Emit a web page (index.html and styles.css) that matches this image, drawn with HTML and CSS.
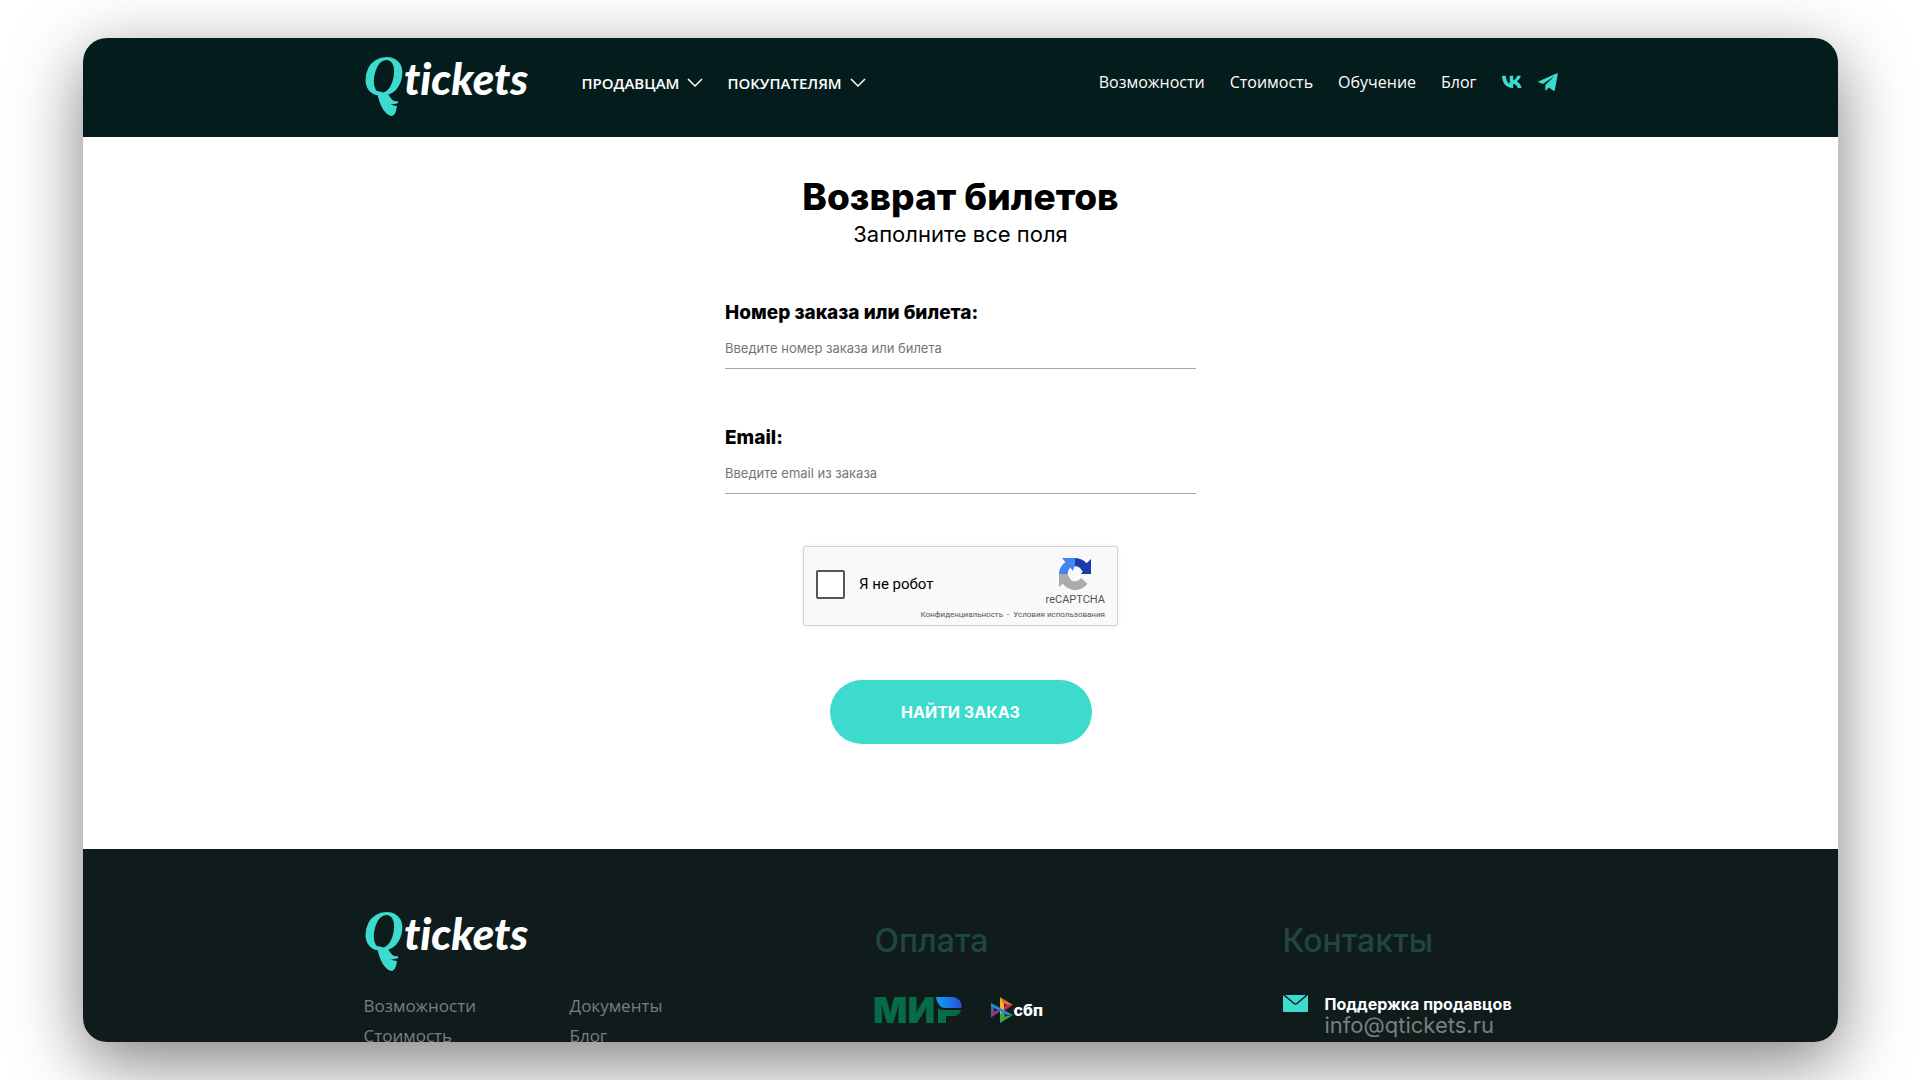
FILE: index.html
```html
<!DOCTYPE html>
<html lang="ru">
<head>
  <meta charset="UTF-8">
  <meta name="viewport" content="width=device-width, initial-scale=1.0">
  <title>Возврат билетов</title>
  <link rel="stylesheet" href="styles.css">
</head>
<body>

<div class="window">
  <header class="header">
    <div class="container header-inner">
      <a class="logo" href="#">
        <span class="logo-q">Q</span><span class="logo-text">tickets</span>
        <svg class="logo-swash" width="20" height="26" viewBox="0 0 20 26"><path fill="#3cdbcd" d="M0 0l5 1c1 8 6 13 15 14-1 6-2 9-5 10C9 25 2 15 0 0z"/></svg>
      </a>

      <nav class="menu">
        <button class="menu-btn" type="button">ПРОДАВЦАМ
          <svg class="chevron" viewBox="0 0 16 10"><path d="M1 1l7 7 7-7"/></svg>
        </button>
        <button class="menu-btn" type="button">ПОКУПАТЕЛЯМ
          <svg class="chevron" viewBox="0 0 16 10"><path d="M1 1l7 7 7-7"/></svg>
        </button>
      </nav>

      <nav class="links">
        <a href="#">Возможности</a>
        <a href="#">Стоимость</a>
        <a href="#">Обучение</a>
        <a href="#">Блог</a>
        <span class="social">
          <a href="#" aria-label="VK">
            <svg width="20" height="20" viewBox="0 0 20 20"><path fill="#3cdbcd" d="M10.900 16C4.100 16 .3 11.400 0 3.800h3.800c.2 5.200 2.400 7.300 4 7.700V3.800h3.400v4.500c1.700-.2 3.400-2.200 4-4.500h3.600c-.5 2.700-2.500 4.800-4 5.700 1.500.7 3.900 2.500 4.900 6.500h-3.900c-.7-2.200-2.400-3.900-4.600-4.200V16z"/></svg>
          </a>
          <a href="#" aria-label="Telegram">
            <svg width="20" height="20" viewBox="0 0 20 20"><path fill="#3cdbcd" d="M18.900 1.200L.9 9.200c-.7.300-.7 1 0 1.200l4 1.500L16.200 4.200 7.300 13v4.900c0 .6.600.8 1 .4l2.500-2.900 4.700 3.400c.6.300 1.100.1 1.300-.6L19.800 2c.1-.6-.3-1-.9-.8z"/></svg>
          </a>
        </span>
      </nav>
    </div>
  </header>

  <main class="content">
    <h1>Возврат билетов</h1>
    <p class="subtitle">Заполните все поля</p>

    <form class="refund-form">
      <div class="field">
        <label for="order">Номер заказа или билета:</label>
        <input type="text" id="order" name="order" placeholder="Введите номер заказа или билета">
      </div>
      <div class="field">
        <label for="email">Email:</label>
        <input type="email" id="email" name="email" placeholder="Введите email из заказа">
      </div>

      <div class="captcha">
        <div class="captcha-check">
          <input type="checkbox" id="robot" name="robot">
          <label for="robot">Я не робот</label>
        </div>
        <div class="captcha-brand">
          <svg width="32" height="32" viewBox="0 0 32 32">
            <path fill="#1c3aa9" d="M16 0c4.700 0 8.800 2.100 11.600 5.200L32 1v15H20l3-3.400c-1.500-2.600-4-4.400-7-4.500z"/>
            <path fill="#4285f4" d="M16 0H3l3.500 4.200C2.500 7 0 11.300 0 16h9c0-2.500.9-4.700 2.300-6.500L14 13l2-3z"/>
            <path fill="#ababab" d="M0 16v13l4-3.300C7 29.600 11.300 32 16 32c5.200 0 9.600-2.500 12.500-6.300L22 20c-1.300 2-3.500 3.300-6 3.300-1.800 0-3.400-.6-4.700-1.600L15 16z"/>
            <path fill="#f9f9f9" d="M8.500 16l1.500-5 4 3 1-5h4l1 4 4 0-4 6-3 4-5-1-2-3z"/>
          </svg>
          <span class="captcha-name">reCAPTCHA</span>
        </div>
        <div class="captcha-terms">
          <a href="#">Конфиденциальность</a> &nbsp;-&nbsp; <a href="#">Условия использования</a>
        </div>
      </div>

      <button class="submit" type="submit">НАЙТИ ЗАКАЗ</button>
    </form>
  </main>

  <footer class="footer">
    <div class="container footer-inner">
      <div class="footer-nav">
        <a class="logo" href="#">
          <span class="logo-q">Q</span><span class="logo-text">tickets</span>
          <svg class="logo-swash" width="20" height="26" viewBox="0 0 20 26"><path fill="#3cdbcd" d="M0 0l5 1c1 8 6 13 15 14-1 6-2 9-5 10C9 25 2 15 0 0z"/></svg>
        </a>
        <div class="footer-links">
          <a href="#">Возможности</a>
          <a href="#">Документы</a>
          <a href="#">Стоимость</a>
          <a href="#">Блог</a>
        </div>
      </div>

      <div class="payment">
        <h2>Оплата</h2>
        <div class="pay-logos">
          <svg class="mir" width="88" height="28" viewBox="0 0 88 28" role="img" aria-label="МИР">
            <defs>
              <linearGradient id="mir" x1="0" x2="1"><stop offset="0" stop-color="#139cf5"/><stop offset="1" stop-color="#2553d8"/></linearGradient>
            </defs>
            <text class="mir-text" x="-2" y="27">МИ</text>
            <path fill="#066b47" d="M63 12c1.500 1.500 3 2 5 2h18c-1 4-4 6-8 6h-7v7h-8z"/>
            <path fill="url(#mir)" d="M61 1h16c6 0 10 4 9.500 11H70c-5 0-8-5-9-11z"/>
          </svg>
          <span class="sbp">
            <svg width="22" height="26" viewBox="0 0 22 26">
              <path fill="#5b57a2" d="M0 6l5 8v2l-5 4.500z"/>
              <path fill="#d9762a" d="M9 0l13 8-6 0-3-1.500z"/>
              <path fill="#f5b22d" d="M9 0l4 6.500V20l-4 6z"/>
              <path fill="#c8234b" d="M22 8l-9 6V9l3-1.500z"/>
              <path fill="#3fa34a" d="M9 26v-9l4-2 1 4 8-1z"/>
              <path fill="#1f8cd0" d="M0 6l22 12h-6L0 9.500z"/>
              <path fill="#8c3f8e" d="M0 20.500l9-6-4-1.500-5 4z"/>
              <path fill="#101c1b" d="M3 11l3 2-3 2zM14 17.500l2 1.300-2 1.200z"/>
            </svg>
            сбп
          </span>
        </div>
      </div>

      <div class="contacts">
        <h2>Контакты</h2>
        <div class="contact">
          <svg width="25" height="17" viewBox="0 0 25 17"><rect width="25" height="17" rx="1" fill="#3cdbcd"/><path d="M1 0l10 8.500c1 .8 2 .8 3 0L24 0" fill="none" stroke="#101c1b" stroke-width="1.500"/></svg>
          <div>
            <strong>Поддержка продавцов</strong>
            <a href="mailto:info@qtickets.ru">info@qtickets.ru</a>
          </div>
        </div>
      </div>
    </div>
  </footer>
</div>

</body>
</html>
```
FILE: styles.css
```css
* {
  box-sizing: border-box;
}
body {
  display: flex;
  height: 100vh;
  margin: 0;
  padding: 38px 82px 38px 83px;
  background: #fff;
  font-family: "Inter", "Open Sans", sans-serif;
  color: #000;
}
a {
  color: inherit;
  text-decoration: none;
}
svg {
  flex: none;
}
.window {
  flex: 1;
  overflow: hidden;
  border-radius: 24px;
  background: #fff;
  box-shadow: 0 20px 68px rgba(0, 0, 0, 0.5);
}
.container {
  width: 100%;
  max-width: 1194px;
  margin: 0 auto;
}

/* header */
.header {
  background: #041c1b;
}
.header-inner {
  display: flex;
  height: 99px;
  padding-bottom: 12px;
  align-items: center;
  font-family: "Open Sans", sans-serif;
  font-size: 16px;
  color: #fff;
}
.logo {
  position: relative;
  display: flex;
  align-items: baseline;
  width: 184px;
  height: 64px;
  color: #fff;
  font-style: italic;
  font-weight: bold;
  line-height: 52px;
}
.logo-q {
  color: #3cdbcd;
  font-family: "Liberation Serif", serif;
  font-size: 56px;
}
.logo-text {
  font-family: "Lato", sans-serif;
  font-weight: 900;
  font-size: 44px;
  font-variant-ligatures: none;
}
.logo-swash {
  position: absolute;
  left: 13px;
  top: 41px;
}
.menu {
  display: flex;
  gap: 24px;
  margin-left: 34px;
}
.menu-btn {
  display: flex;
  align-items: center;
  gap: 8px;
  padding: 2px 0 0;
  border: 0;
  background: none;
  color: #fff;
  font: 600 15px "Open Sans", sans-serif;
  cursor: pointer;
}
.chevron {
  width: 16px;
  height: 10px;
  fill: none;
  stroke: #fff;
  stroke-width: 1.5;
}
.links {
  display: flex;
  align-items: center;
  gap: 25px;
  margin-left: auto;
}
.social {
  display: flex;
  gap: 16px;
}
.social svg {
  display: block;
}

/* form */
.content {
  height: 712px;
  padding-top: 37px;
  text-align: center;
}
h1 {
  margin: 0;
  font-size: 37px;
  font-weight: 800;
  line-height: 46px;
}
.subtitle {
  margin: 0;
  font-size: 22px;
  line-height: 28px;
}
.refund-form {
  display: flex;
  flex-direction: column;
  align-items: center;
  max-width: 471px;
  margin: 53px auto 0;
}
.field {
  width: 100%;
  text-align: left;
}
.field + .field {
  margin-top: 57px;
}
.field label {
  display: block;
  font-size: 19px;
  font-weight: 800;
  line-height: 24px;
}
.field input {
  display: block;
  width: 100%;
  height: 44px;
  padding: 2px 0 0;
  border: 0;
  border-bottom: 1px solid #a5a5a5;
  outline: 0;
  font-family: inherit;
  font-size: 13px;
}
.field input::placeholder {
  color: #757575;
}
.captcha {
  display: grid;
  grid-template-columns: 1fr auto;
  width: 315px;
  height: 80px;
  margin-top: 52px;
  padding: 11px 12px 5px;
  border: 1px solid #d3d3d3;
  border-radius: 3px;
  background: #f9f9f9;
  box-shadow: 0 0 4px rgba(0, 0, 0, 0.08);
  font-family: "Roboto", sans-serif;
}
.captcha-check {
  display: flex;
  align-items: center;
  gap: 14px;
  font-size: 15px;
}
.captcha-check input {
  appearance: none;
  width: 29px;
  height: 29px;
  margin: 0;
  border: 2px solid #555;
  border-radius: 2px;
  background: #fff;
}
.captcha-brand {
  display: flex;
  flex-direction: column;
  align-items: center;
  color: #555;
}
.captcha-name {
  font-size: 11px;
  line-height: 20px;
}
.captcha-terms {
  grid-column: 1 / 3;
  color: #555;
  font-size: 8px;
  line-height: 10px;
  text-align: right;
}
.submit {
  width: 262px;
  height: 64px;
  margin-top: 54px;
  border: 0;
  border-radius: 32px;
  background: #3cdbcd;
  color: #fff;
  font-family: inherit;
  font-size: 16px;
  font-weight: bold;
  cursor: pointer;
}

/* footer */
.footer {
  background: #101c1b;
  color: #787f7e;
}
.footer-inner {
  display: grid;
  grid-template-columns: 511fr 408fr 275fr;
  height: 360px;
  padding-top: 56px;
}
.footer-links {
  display: grid;
  grid-template-columns: 206px 1fr;
  row-gap: 6px;
  margin-top: 25px;
  font-family: "Open Sans", sans-serif;
  font-size: 17px;
  line-height: 24px;
}
.footer h2 {
  margin: 16px 0 0;
  color: #21463f;
  font-size: 32px;
  font-weight: 500;
  line-height: 40px;
}
.pay-logos {
  display: flex;
  align-items: center;
  gap: 28px;
  margin-top: 35px;
}
.mir {
  overflow: visible;
}
.mir-text {
  fill: #066b47;
  font-family: "Inter", sans-serif;
  font-size: 36px;
  font-weight: 900;
}
.sbp {
  display: flex;
  align-items: center;
  gap: 1px;
  color: #fff;
  font-size: 16px;
  font-weight: 800;
}
.contact {
  display: flex;
  gap: 17px;
  margin-top: 34px;
}
.contact strong {
  display: block;
  color: #fff;
  font-size: 16px;
  line-height: 18px;
}
.contact a {
  font-size: 22px;
  line-height: 24px;
}
```
